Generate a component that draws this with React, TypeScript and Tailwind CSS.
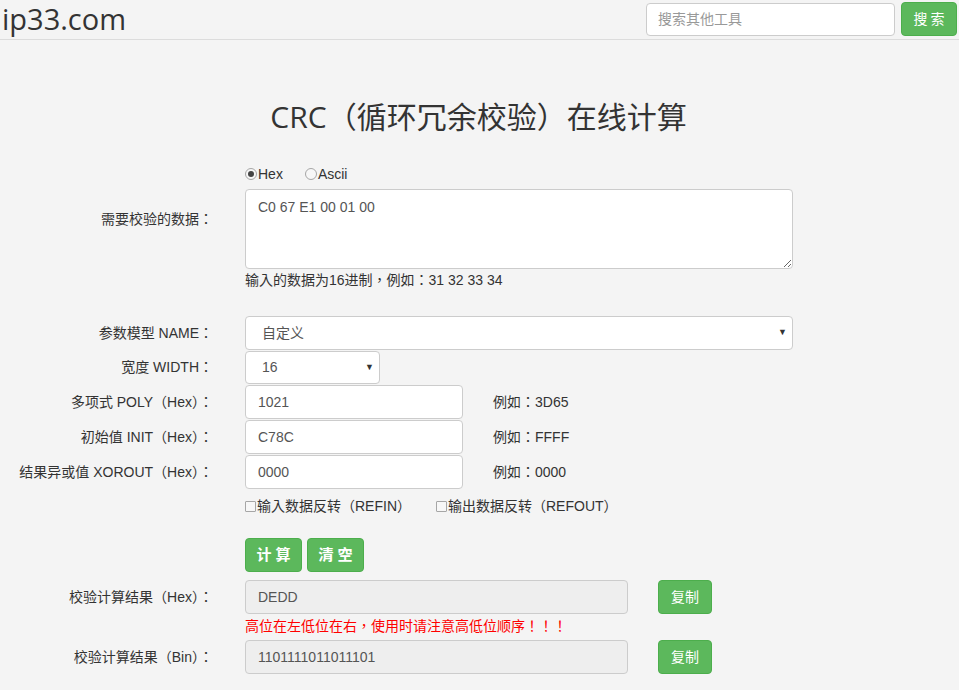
import { useState } from 'react'

const SANS = { fontFamily: "'Liberation Sans', 'Noto Sans CJK TC', sans-serif" }
const TITLE = { fontFamily: "'Open Sans', 'Noto Sans CJK TC', sans-serif" }

const PARAMS = [
  { label: '多项式 POLY（Hex）：', value: '1021', example: '例如：3D65' },
  { label: '初始值 INIT（Hex）：', value: 'C78C', example: '例如：FFFF' },
  { label: '结果异或值 XOROUT（Hex）：', value: '0000', example: '例如：0000' },
]

function Label({ children, className = '' }: { children?: React.ReactNode; className?: string }) {
  return (
    <div className={`w-[215px] shrink-0 text-right text-[14px] text-[#333] pr-[2px] ${className}`}>
      {children}
    </div>
  )
}

function Radio({ checked, label }: { checked?: boolean; label: string }) {
  return (
    <span className="flex items-center">
      <span className="w-[12px] h-[12px] rounded-full border border-[#a6a6a6] bg-[#f7f7f7] flex items-center justify-center">
        {checked && <span className="w-[6px] h-[6px] rounded-full bg-[#444]" />}
      </span>
      <span className="ml-[1px]">{label}</span>
    </span>
  )
}

function Check({ label }: { label: string }) {
  return (
    <span className="flex items-center">
      <span className="w-[11px] h-[11px] border border-[#a6a6a6] bg-[#f7f7f7] rounded-[1px]" />
      <span className="ml-[1px]">{label}</span>
    </span>
  )
}

function GreenButton({ children, className = '' }: { children: React.ReactNode; className?: string }) {
  return (
    <button
      className={`h-[34px] rounded-[4px] bg-[#5cb85c] border border-[#4cae4c] text-white text-[14px] ${className}`}
    >
      {children}
    </button>
  )
}

export default function App() {
  const [data, setData] = useState('C0 67 E1 00 01 00')

  return (
    <div className="min-h-screen bg-[#f4f4f4] text-[#333]" style={SANS}>
      <header className="h-[40px] border-b border-[#dcdcdc] flex items-center justify-between pl-[2px] pr-[2px]">
        <span className="text-[29px] text-[#333] leading-none -mt-[3px]" style={TITLE}>
          ip33.com
        </span>
        <div className="flex items-center gap-[6px] -mt-[1px]">
          <input
            className="w-[249px] h-[33px] rounded-[4px] border border-[#ccc] bg-white px-[11px] text-[14px] outline-none placeholder:text-[#999]"
            placeholder="搜索其他工具"
          />
          <GreenButton className="w-[56px] h-[33px] tracking-[3px] pl-[3px]">搜索</GreenButton>
        </div>
      </header>

      <h1 className="text-center text-[30px] text-[#333] mt-[57px] leading-[40px] pr-[2px]" style={TITLE}>
        CRC（循环冗余校验）在线计算
      </h1>

      <div className="mt-[28px] flex flex-col text-[14px]">
        <div className="flex">
          <Label />
          <div className="ml-[30px] flex items-center gap-[22px] h-[18px]">
            <Radio checked label="Hex" />
            <Radio label="Ascii" />
          </div>
        </div>

        <div className="flex mt-[6px]">
          <Label className="pt-[20px]">需要校验的数据：</Label>
          <div className="ml-[30px] w-[548px]">
            <textarea
              value={data}
              onChange={(e) => setData(e.target.value)}
              className="block w-full h-[80px] rounded-[4px] border border-[#ccc] bg-white px-[12px] py-[7px] text-[14px] text-[#555] outline-none"
              style={SANS}
            />
            <p className="mt-[2px] text-[14px] leading-[19px] text-[#333]">输入的数据为16进制，例如：31 32 33 34</p>
          </div>
        </div>

        <div className="flex items-center mt-[26px]">
          <Label>参数模型 NAME：</Label>
          <div className="ml-[30px] relative w-[548px] h-[34px] rounded-[4px] border border-[#ccc] bg-white flex items-center pl-[16px] text-[#555]">
            自定义
            <span className="absolute right-[5px] text-[9px] text-[#333]">▼</span>
          </div>
        </div>

        <div className="flex items-center mt-[1px]">
          <Label>宽度 WIDTH：</Label>
          <div className="ml-[30px] relative w-[135px] h-[33px] rounded-[4px] border border-[#ccc] bg-white flex items-center pl-[16px] text-[#555]">
            16
            <span className="absolute right-[5px] text-[9px] text-[#333]">▼</span>
          </div>
        </div>

        {PARAMS.map((p) => (
          <div key={p.label} className="flex items-center mt-[1px]">
            <Label>{p.label}</Label>
            <input
              readOnly
              value={p.value}
              className="ml-[30px] w-[218px] h-[34px] rounded-[4px] border border-[#ccc] bg-white px-[12px] text-[14px] text-[#555] outline-none"
              style={SANS}
            />
            <span className="ml-[30px] text-[#333]">{p.example}</span>
          </div>
        ))}

        <div className="flex mt-[8px]">
          <Label />
          <div className="ml-[30px] flex items-center gap-[25px] h-[18px]">
            <Check label="输入数据反转（REFIN）" />
            <Check label="输出数据反转（REFOUT）" />
          </div>
        </div>

        <div className="flex mt-[23px]">
          <Label />
          <div className="ml-[30px] flex gap-[5px]">
            <GreenButton className="w-[57px] tracking-[4px] pl-[4px] font-bold text-[15px]">计算</GreenButton>
            <GreenButton className="w-[57px] tracking-[4px] pl-[4px] font-bold text-[15px]">清空</GreenButton>
          </div>
        </div>

        <div className="flex items-center mt-[8px]">
          <Label>校验计算结果（Hex）：</Label>
          <input
            readOnly
            value="DEDD"
            className="ml-[30px] w-[383px] h-[34px] rounded-[4px] border border-[#ccc] bg-[#eee] px-[12px] text-[14px] text-[#555] outline-none"
            style={SANS}
          />
          <GreenButton className="ml-[30px] w-[54px]">复制</GreenButton>
        </div>

        <div className="flex">
          <Label />
          <p className="ml-[30px] text-[#f00] leading-[24px]">高位在左低位在右，使用时请注意高低位顺序！！！</p>
        </div>

        <div className="flex items-center mt-[2px]">
          <Label>校验计算结果（Bin）：</Label>
          <input
            readOnly
            value="1101111011011101"
            className="ml-[30px] w-[383px] h-[34px] rounded-[4px] border border-[#ccc] bg-[#eee] px-[12px] text-[14px] text-[#555] outline-none"
            style={SANS}
          />
          <GreenButton className="ml-[30px] w-[54px]">复制</GreenButton>
        </div>
      </div>
    </div>
  )
}
